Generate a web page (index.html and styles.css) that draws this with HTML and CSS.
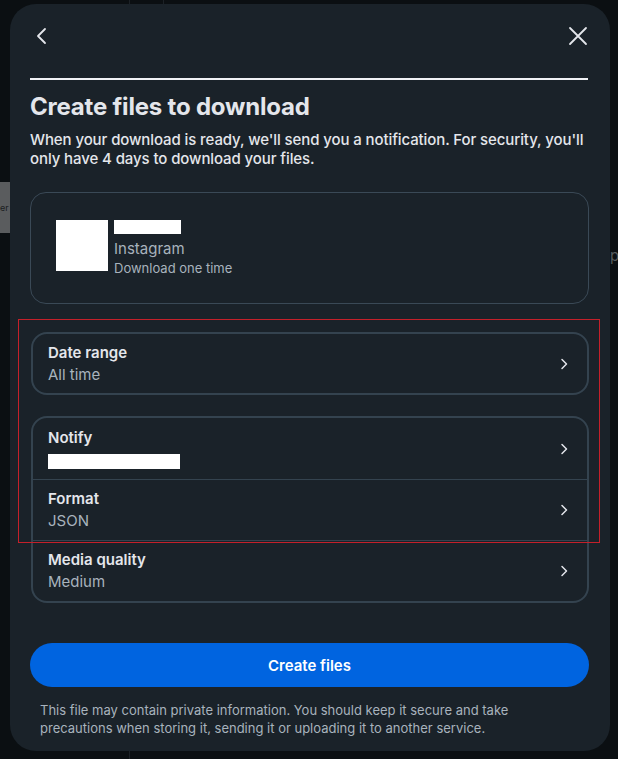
FILE: index.html
```html
<!DOCTYPE html>
<html lang="en">
<head>
<meta charset="utf-8">
<title>Create files to download</title>
<link rel="stylesheet" href="styles.css">
</head>
<body>
<div class="backdrop">
  <div class="bg-tab">er</div>
  <div class="bg-text">p</div>
  <div class="bg-line l1"></div>
  <div class="bg-line l2"></div>
  <div class="bg-line l3"></div>

  <div class="modal">
    <div class="topbar">
      <button class="icon-btn" aria-label="Back">
        <svg width="20" height="20" viewBox="0 0 20 20"><path d="M13 3 L6 10 L13 17" fill="none" stroke="#e4e6eb" stroke-width="1.8" stroke-linecap="round" stroke-linejoin="round"/></svg>
      </button>
      <button class="icon-btn" aria-label="Close">
        <svg width="20" height="20" viewBox="0 0 20 20"><path d="M2 2 L18 18 M18 2 L2 18" fill="none" stroke="#e4e6eb" stroke-width="1.8" stroke-linecap="round"/></svg>
      </button>
    </div>
    <div class="rule"></div>

    <h1 class="title">Create files to download</h1>
    <p class="desc">When your download is ready, we'll send you a notification. For security, you'll only have 4 days to download your files.</p>

    <div class="account-card">
      <div class="avatar"></div>
      <div class="account-info">
        <div class="redact name-redact"></div>
        <div class="acc-app">Instagram</div>
        <div class="acc-sub">Download one time</div>
      </div>
    </div>

    <div class="options">
      <div class="highlight"></div>
      <div class="card single">
        <div class="row">
          <div class="row-text">
            <div class="row-label">Date range</div>
            <div class="row-value">All time</div>
          </div>
          <svg class="chev" width="10" height="14" viewBox="0 0 10 14"><path d="M3 2.5 L7.5 7 L3 11.5" fill="none" stroke="#e4e6eb" stroke-width="1.5" stroke-linecap="round" stroke-linejoin="round"/></svg>
        </div>
      </div>

      <div class="card group">
        <div class="row">
          <div class="row-text">
            <div class="row-label">Notify</div>
            <div class="redact notify-redact"></div>
          </div>
          <svg class="chev" width="10" height="14" viewBox="0 0 10 14"><path d="M3 2.5 L7.5 7 L3 11.5" fill="none" stroke="#e4e6eb" stroke-width="1.5" stroke-linecap="round" stroke-linejoin="round"/></svg>
        </div>
        <div class="row">
          <div class="row-text">
            <div class="row-label">Format</div>
            <div class="row-value">JSON</div>
          </div>
          <svg class="chev" width="10" height="14" viewBox="0 0 10 14"><path d="M3 2.5 L7.5 7 L3 11.5" fill="none" stroke="#e4e6eb" stroke-width="1.5" stroke-linecap="round" stroke-linejoin="round"/></svg>
        </div>
        <div class="row">
          <div class="row-text">
            <div class="row-label">Media quality</div>
            <div class="row-value">Medium</div>
          </div>
          <svg class="chev" width="10" height="14" viewBox="0 0 10 14"><path d="M3 2.5 L7.5 7 L3 11.5" fill="none" stroke="#e4e6eb" stroke-width="1.5" stroke-linecap="round" stroke-linejoin="round"/></svg>
        </div>
      </div>
    </div>

    <button class="primary">Create files</button>
    <p class="footnote">This file may contain private information. You should keep it secure and take precautions when storing it, sending it or uploading it to another service.</p>
  </div>
</div>
</body>
</html>
```

FILE: styles.css
```css
* { box-sizing: border-box; }
html, body { margin: 0; padding: 0; }
body {
  background: #0b0f12;
  font-family: Inter, "Noto Sans", "Liberation Sans", sans-serif;
  color: #e4e6eb;
  width: 618px;
  height: 759px;
  overflow: hidden;
}
.backdrop {
  position: relative;
  width: 618px;
  height: 759px;
  padding: 4px 8px 0 10px;
}
.bg-tab {
  position: absolute;
  left: 0;
  top: 182px;
  width: 10px;
  height: 51px;
  background: #5a5c5e;
  color: #1a1c1e;
  font-size: 9px;
  line-height: 51px;
  text-align: left;
  overflow: hidden;
}
.bg-text {
  position: absolute;
  left: 610px;
  top: 246px;
  font-size: 15px;
  color: #555a5e;
}
.bg-line { position: absolute; background: #1c2126; }
.bg-line.l1 { left: 129px; top: 0; width: 1px; height: 5px; }
.bg-line.l2 { left: 163px; top: 0; width: 1px; height: 5px; }
.bg-line.l3 { left: 129px; top: 751px; width: 1px; height: 8px; }

.modal {
  position: relative;
  width: 600px;
  height: 747px;
  background: #1a2229;
  border-radius: 26px;
  padding: 0 21px 0 20px;
}
.topbar {
  height: 64px;
  display: flex;
  align-items: center;
  justify-content: space-between;
}
.icon-btn {
  background: none;
  border: 0;
  padding: 0;
  width: 24px;
  height: 24px;
  display: flex;
  align-items: center;
  justify-content: center;
}
.icon-btn:last-child { margin-right: -1px; }
.rule {
  margin-top: 10px;
  height: 2px;
  background: #f0f2f5;
  margin-right: 1px;
}
.title {
  margin: 12px 0 0 0;
  font-size: 24px;
  line-height: 30px;
  font-weight: 700;
  color: #e4e6eb;
  letter-spacing: -0.2px;
}
.desc {
  margin: 8px 0 0 0;
  font-size: 15px;
  line-height: 19px;
  font-weight: 500;
  color: #e4e6eb;
  letter-spacing: -0.1px;
}
.account-card {
  margin-top: 24px;
  height: 112px;
  border: 1px solid #3a4956;
  border-radius: 16px;
  display: flex;
  align-items: center;
  padding: 0 0 0 25px;
  gap: 6px;
}
.avatar {
  width: 52px;
  height: 51px;
  background: #ffffff;
  margin-top: -5px;
}
.account-info {
  display: flex;
  flex-direction: column;
  margin-top: 1px;
}
.redact { background: #ffffff; }
.name-redact { width: 67px; height: 14px; margin-bottom: 5px; }
.acc-app {
  font-size: 15px;
  line-height: 20px;
  color: #a8b3bd;
}
.acc-sub {
  font-size: 13px;
  line-height: 18px;
  color: #a8b3bd;
}

.options {
  position: relative;
  margin-top: 28px;
  display: flex;
  flex-direction: column;
  gap: 21px;
}
.highlight {
  position: absolute;
  left: -12px;
  top: -13px;
  width: 582px;
  height: 224px;
  border: 1px solid #c4202a;
  pointer-events: none;
}
.card {
  border: 2px solid #34434f;
  border-radius: 16px;
  margin-left: 1px;
}
.row {
  height: 61px;
  display: flex;
  align-items: center;
  justify-content: space-between;
  padding: 0 18px 0 15px;
}
.single .row { height: 59px; }
.group .row + .row { border-top: 1px solid #34434f; }
.row-text { display: flex; flex-direction: column; }
.row-label {
  font-size: 15px;
  line-height: 20px;
  font-weight: 600;
  color: #e4e6eb;
}
.row-value {
  font-size: 15px;
  line-height: 20px;
  color: #a8b3bd;
  margin-top: 2px;
}
.notify-redact { width: 132px; height: 15px; margin-top: 6px; margin-bottom: 1px; }
.chev { display: block; }

.primary {
  display: block;
  width: 559px;
  height: 44px;
  margin-top: 40px;
  border: 0;
  border-radius: 22px;
  background: #0064e0;
  color: #ffffff;
  font-family: inherit;
  font-size: 15px;
  font-weight: 600;
}
.footnote {
  margin: 14px 0 0 0;
  padding: 0 10px;
  font-size: 13px;
  line-height: 18px;
  color: #a8b3bd;
}
```
